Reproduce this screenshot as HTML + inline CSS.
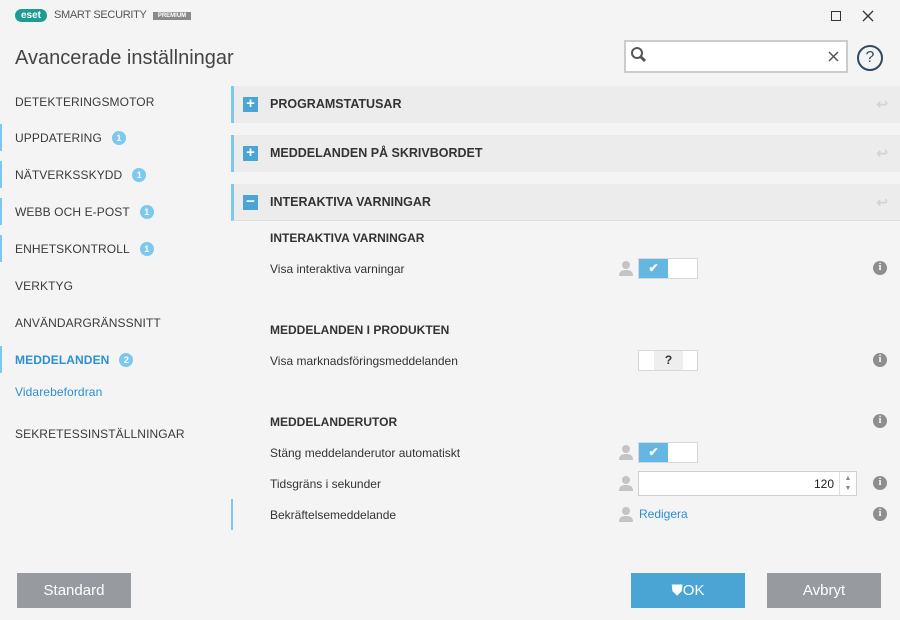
<!DOCTYPE html>
<html><head><meta charset="utf-8"><style>
*{margin:0;padding:0;box-sizing:border-box}
body{width:900px;height:620px;background:#f4f4f4;font-family:"Liberation Sans",sans-serif;color:#333;position:relative;overflow:hidden}
.a{position:absolute}
.nav{position:absolute;left:15px;font-size:12px;color:#3a3a3a;letter-spacing:.1px}
.bar{position:absolute;left:0;width:2px;height:27px;background:#7cc8ef}
.badge{display:inline-block;width:14px;height:14px;border-radius:7px;background:#7cc8ef;color:#fff;font-size:9px;font-weight:bold;text-align:center;line-height:14px;margin-left:10px;vertical-align:1px}
.sec{position:absolute;left:231px;right:0;height:37px;background:#ececec;border-left:3px solid #7cc8ef}
.sec .ic{position:absolute;left:9px;top:11px;width:15px;height:15px;background:#4aa5d5;color:#fff;font-weight:bold;font-size:15px;line-height:14px;text-align:center}
.sec .t{position:absolute;left:36px;top:11px;font-size:12.5px;font-weight:bold;color:#333}
.sec .u{position:absolute;right:12px;top:10px;color:#d4d4d4;font-size:14px;font-weight:bold}
.h{position:absolute;left:270px;font-size:12px;font-weight:bold;color:#333}
.l{position:absolute;left:270px;font-size:12px;color:#333}
.info{position:absolute;left:873px;width:14px;height:14px;border-radius:7px;background:#8e8e8e;color:#fff;font-size:10px;font-weight:bold;text-align:center;line-height:14px;font-family:"Liberation Serif",serif}
.user{position:absolute;left:618px;width:16px;height:16px}
.tog{position:absolute;left:638px;width:60px;height:21px;border:1px solid #d8d8d8;background:#fff}
.tog .on{position:absolute;left:0;top:0;width:29px;height:19px;background:#63b7e2;color:#fff;font-size:12px;text-align:center;line-height:19px;font-weight:bold}
.btn{position:absolute;top:573px;width:114px;height:35px;color:#fff;font-size:15px;text-align:center;line-height:35px}
</style></head><body>
<div class="a" style="left:15px;top:9px;width:32px;height:13px;background:#1d9c95;border-radius:7px;color:#fff;font-size:10px;font-weight:bold;line-height:13px;text-align:center">eset</div>
<div class="a" style="left:54px;top:9px;font-size:11px;color:#555;letter-spacing:-.3px">SMART SECURITY</div>
<div class="a" style="left:153px;top:12px;width:38px;height:8px;background:#8a8a8a;color:#fff;font-size:6px;line-height:8px;text-align:center;font-weight:bold">PREMIUM</div>
<div class="a" style="left:831px;top:11px;width:10px;height:10px;border:1px solid #333"></div>
<svg class="a" style="left:862px;top:10px" width="12" height="12"><path d="M1 1L11 11M11 1L1 11" stroke="#333" stroke-width="1.3"/></svg>
<div class="a" style="left:15px;top:47px;font-size:20px;color:#444">Avancerade inställningar</div>
<div class="a" style="left:624px;top:40px;width:224px;height:33px;border:2px solid #ccc;background:#fff"></div>
<svg class="a" style="left:628px;top:44px" width="22" height="22"><circle cx="9" cy="9" r="5" fill="none" stroke="#555" stroke-width="2"/><line x1="12" y1="12" x2="17" y2="17" stroke="#555" stroke-width="3"/></svg>
<svg class="a" style="left:828px;top:51px" width="11" height="11"><path d="M1 1L10 10M10 1L1 10" stroke="#555" stroke-width="1.5"/></svg>
<div class="a" style="left:857px;top:45px;width:26px;height:26px;border:2px solid #34495e;border-radius:13px;text-align:center;line-height:22px;font-size:16px;color:#34495e">?</div>

<div class="nav" style="top:95px">DETEKTERINGSMOTOR</div>
<div class="bar" style="top:124px"></div><div class="nav" style="top:131px">UPPDATERING<span class="badge">1</span></div>
<div class="bar" style="top:161px"></div><div class="nav" style="top:168px">NÄTVERKSSKYDD<span class="badge">1</span></div>
<div class="bar" style="top:198px"></div><div class="nav" style="top:205px">WEBB OCH E-POST<span class="badge">1</span></div>
<div class="bar" style="top:235px"></div><div class="nav" style="top:242px">ENHETSKONTROLL<span class="badge">1</span></div>
<div class="nav" style="top:279px">VERKTYG</div>
<div class="nav" style="top:316px">ANVÄNDARGRÄNSSNITT</div>
<div class="bar" style="top:346px"></div><div class="nav" style="top:353px;color:#2c8fd0;font-weight:bold">MEDDELANDEN<span class="badge">2</span></div>
<div class="nav" style="top:385px;color:#2c8fd0">Vidarebefordran</div>
<div class="nav" style="top:427px">SEKRETESSINSTÄLLNINGAR</div>

<div class="sec" style="top:86px"><div class="ic">+</div><div class="t">PROGRAMSTATUSAR</div><div class="u">↩</div></div>
<div class="sec" style="top:135px"><div class="ic">+</div><div class="t">MEDDELANDEN PÅ SKRIVBORDET</div><div class="u">↩</div></div>
<div class="sec" style="top:184px;border-bottom:1px solid #ddd"><div class="ic">−</div><div class="t">INTERAKTIVA VARNINGAR</div><div class="u">↩</div></div>

<div class="h" style="top:231px">INTERAKTIVA VARNINGAR</div>
<div class="l" style="top:262px">Visa interaktiva varningar</div>
<svg class="user" style="top:260px" viewBox="0 0 16 16"><circle cx="8" cy="5" r="4" fill="#c4c4c4"/><path d="M1 16c0-5 3-6 7-6s7 1 7 6z" fill="#c4c4c4"/></svg>
<div class="tog" style="top:258px"><div class="on">✔</div></div>
<div class="info" style="top:261px">i</div>

<div class="h" style="top:323px">MEDDELANDEN I PRODUKTEN</div>
<div class="l" style="top:354px">Visa marknadsföringsmeddelanden</div>
<div class="tog" style="top:350px"><div class="a" style="left:15px;top:0;width:29px;height:19px;background:#eee;text-align:center;line-height:19px;font-weight:bold;font-size:12px">?</div></div>
<div class="info" style="top:353px">i</div>

<div class="h" style="top:415px">MEDDELANDERUTOR</div>
<div class="info" style="top:414px">i</div>
<div class="l" style="top:446px">Stäng meddelanderutor automatiskt</div>
<svg class="user" style="top:444px" viewBox="0 0 16 16"><circle cx="8" cy="5" r="4" fill="#c4c4c4"/><path d="M1 16c0-5 3-6 7-6s7 1 7 6z" fill="#c4c4c4"/></svg>
<div class="tog" style="top:442px"><div class="on">✔</div></div>
<div class="l" style="top:477px">Tidsgräns i sekunder</div>
<svg class="user" style="top:475px" viewBox="0 0 16 16"><circle cx="8" cy="5" r="4" fill="#c4c4c4"/><path d="M1 16c0-5 3-6 7-6s7 1 7 6z" fill="#c4c4c4"/></svg>
<div class="a" style="left:638px;top:471px;width:219px;height:25px;border:1px solid #d0d0d0;background:#fff"><div class="a" style="right:22px;top:5px;font-size:12px;color:#222">120</div><div class="a" style="right:0;top:0;width:17px;height:23px;border-left:1px solid #e0e0e0;color:#888;font-size:7px;text-align:center;line-height:10px;padding-top:2px">▲<br>▼</div></div>
<div class="info" style="top:476px">i</div>
<div class="a" style="left:231px;top:499px;width:2px;height:31px;background:#7cc8ef"></div>
<div class="l" style="top:508px">Bekräftelsemeddelande</div>
<svg class="user" style="top:506px" viewBox="0 0 16 16"><circle cx="8" cy="5" r="4" fill="#c4c4c4"/><path d="M1 16c0-5 3-6 7-6s7 1 7 6z" fill="#c4c4c4"/></svg>
<div class="a" style="left:639px;top:507px;font-size:12px;color:#2c8fd0">Redigera</div>
<div class="info" style="top:507px">i</div>

<div class="btn" style="left:17px;background:#979b9f">Standard</div>
<div class="btn" style="left:631px;background:#4aa5d5">⛊OK</div>
<div class="btn" style="left:767px;background:#979b9f">Avbryt</div>
</body></html>
